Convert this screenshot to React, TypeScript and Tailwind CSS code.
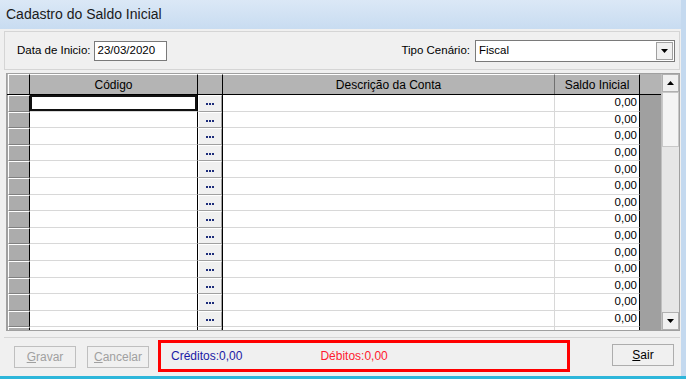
const rows = Array.from({ length: 15 }, (_, i) => i);

function Arrow({ up }: { up?: boolean }) {
  return (
    <svg width="7" height="4" viewBox="0 0 7 4" className={up ? "" : "rotate-180"}>
      <path d="M0 4 L3.5 0 L7 4 Z" fill="#000" />
    </svg>
  );
}

function DotsButton() {
  return (
    <div className="h-full w-[24px] bg-[#f0f0f0] border-t border-l border-white border-r border-b border-r-[#a0a0a0] border-b-[#a0a0a0] flex items-center justify-center">
      <span className="flex gap-[1px] mt-[2px]">
        <span className="w-[2px] h-[2px] bg-[#1c2c7a]" />
        <span className="w-[2px] h-[2px] bg-[#1c2c7a]" />
        <span className="w-[2px] h-[2px] bg-[#1c2c7a]" />
      </span>
    </div>
  );
}

function WinButton({ label, accel, disabled }: { label: string; accel: string; disabled?: boolean }) {
  const rest = label.slice(1);
  return (
    <div
      className={
        "w-[62px] h-[22px] border bg-[#f0f0f0] flex items-center justify-center text-[12px] " +
        (disabled ? "border-[#bfbfbf] text-[#a0a0a0]" : "border-[#adadad] text-black")
      }
    >
      <span>
        <span className="underline">{accel}</span>
        {rest}
      </span>
    </div>
  );
}

export default function App() {
  return (
    <div className="w-[686px] h-[379px] bg-[#f0f0f0] overflow-hidden relative font-['Liberation_Sans',Arial,sans-serif] text-[12px] text-black">
      {/* title bar */}
      <div className="h-[29px] bg-gradient-to-b from-[#dbe8f6] to-[#c8dcf1] flex items-center pl-[6px] text-[14px] text-[#1a1a1a] border-r-[5px] border-[#c4d9ef]">
        Cadastro do Saldo Inicial
      </div>

      <div className="flex border-r-[5px] border-[#c4d9ef] h-[347px]">
        <div className="flex-1 flex flex-col pl-[4px] pr-[1px]">
          {/* top filter panel */}
          <div className="mt-[2px] h-[39px] border border-[#d5d5d5] flex items-center pl-[12px] pr-[4px] text-[11.5px]">
            <span className="mr-[3px]">Data de Inicio:</span>
            <div className="w-[73px] h-[20px] bg-white border border-[#7a7a7a] flex items-center pl-[3px]">23/03/2020</div>
            <span className="ml-auto mr-[5px]">Tipo Cenário:</span>
            <div className="w-[200px] h-[22px] bg-white border border-[#7a7a7a] flex items-center pl-[3px] relative">
              <span>Fiscal</span>
              <div className="ml-auto mr-[1px] w-[17px] h-[18px] bg-[#f0f0f0] border border-[#a0a0a0] flex items-center justify-center">
                <svg width="7" height="4" viewBox="0 0 7 4">
                  <path d="M0 0 L7 0 L3.5 4 Z" fill="#000" />
                </svg>
              </div>
            </div>
          </div>

          {/* grid */}
          <div className="mt-[3px] ml-[2px] h-[258px] border border-[#a0a0a0] bg-[#a0a0a0] flex overflow-hidden">
            <div className="flex-1 flex flex-col overflow-hidden">
              {/* header */}
              <div className="flex h-[21px] shrink-0 bg-[#b4b4b4] border-b border-[#000]">
                <div className="w-[22px] border-t border-l border-white border-r border-r-black ml-[1px]" />
                <div className="w-[168px] border-t border-white border-r border-r-black flex items-center justify-center">Código</div>
                <div className="w-[25px] border-t border-white border-r border-r-black" />
                <div className="w-[332px] border-t border-white border-r border-r-[#707070] flex items-center justify-center">Descrição da Conta</div>
                <div className="w-[85px] border-t border-white border-r border-r-black flex items-center justify-center">Saldo Inicial</div>
              </div>
              {rows.map((i) => (
                <div key={i} className="flex h-[16.6px] shrink-0">
                  <div className="w-[22px] ml-[1px] bg-[#acacac] border-t border-l border-white border-b border-b-[#808080] border-r border-r-black" />
                  <div className="w-[168px] bg-white border-b border-[#d8d8d8] border-r border-r-black relative">
                    {i === 0 && <div className="absolute inset-0 border-2 border-[#111]" />}
                  </div>
                  <div className="w-[25px] bg-white border-r border-black">
                    <DotsButton />
                  </div>
                  <div className="w-[332px] bg-white border-b border-[#d8d8d8] border-r border-r-[#d8d8d8]" />
                  <div className="w-[85px] bg-white border-b border-[#d8d8d8] border-r border-r-black flex items-center justify-end pr-[2px] text-[11.5px]">
                    0,00
                  </div>
                </div>
              ))}
            </div>
            {/* scrollbar */}
            <div className="w-[18px] shrink-0 bg-[#e8e8e8] flex flex-col border-l border-[#c0c0c0]">
              <div className="h-[18px] bg-[#f0f0f0] border border-[#b0b0b0] flex items-center justify-center">
                <Arrow up />
              </div>
              <div className="h-[55px] bg-[#f4f4f4] border border-[#c8c8c8]" />
              <div className="flex-1 bg-[#e6e6e6]" />
              <div className="h-[18px] bg-[#f0f0f0] border border-[#b0b0b0] flex items-center justify-center">
                <Arrow />
              </div>
            </div>
          </div>

          {/* footer */}
          <div className="mt-[6px] h-[34px] border-t border-[#d5d5d5] flex items-center pl-[10px] pr-[6px]">
            <div className="flex gap-[11px] mt-[4px]">
              <WinButton label="Gravar" accel="G" disabled />
              <WinButton label="Cancelar" accel="C" disabled />
            </div>
            <div className="ml-[9px] mt-[2px] w-[412px] h-[32px] border-[3px] border-[#ff0000] flex items-center text-[12px]">
              <span className="ml-[10px] text-[#1a1aa5]">Créditos:0,00</span>
              <span className="ml-[78px] text-[#ff1a2e]">Débitos:0,00</span>
            </div>
            <div className="ml-auto">
              <WinButton label="Sair" accel="S" />
            </div>
          </div>
        </div>
      </div>
      <div className="absolute left-0 right-0 bottom-0 h-[3px] bg-[#2eb6da]" />
    </div>
  );
}
